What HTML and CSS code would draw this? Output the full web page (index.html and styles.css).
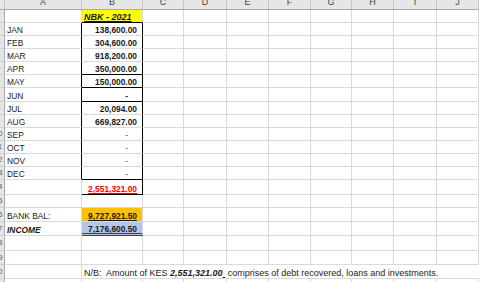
FILE: index.html
```html
<!DOCTYPE html>
<html>
<head>
<meta charset="utf-8">
<link rel="stylesheet" href="styles.css">
</head>
<body>
<div class="sheet">
  <div class="row hdr">
    <div class="ch"></div>
    <div class="ch"><span>A</span></div>
    <div class="ch"><span>B</span></div>
    <div class="ch"><span>C</span></div>
    <div class="ch"><span>D</span></div>
    <div class="ch"><span>E</span></div>
    <div class="ch"><span>F</span></div>
    <div class="ch"><span>G</span></div>
    <div class="ch"><span>H</span></div>
    <div class="ch"><span>I</span></div>
    <div class="ch"><span>J</span></div>
  </div>

  <div class="row h13">
    <div class="rh"><span>1</span></div>
    <div class="c"></div>
    <div class="c yel bb"><span class="nbk">NBK - 2021</span></div>
    <div class="c"></div><div class="c"></div><div class="c"></div><div class="c"></div><div class="c"></div><div class="c"></div><div class="c"></div><div class="c"></div>
  </div>

  <div class="row h13">
    <div class="rh"><span>2</span></div>
    <div class="c ar">JAN</div>
    <div class="c n br">138,600.00</div>
    <div class="c"></div><div class="c"></div><div class="c"></div><div class="c"></div><div class="c"></div><div class="c"></div><div class="c"></div><div class="c"></div>
  </div>

  <div class="row h13">
    <div class="rh"><span>3</span></div>
    <div class="c ar">FEB</div>
    <div class="c n br">304,600.00</div>
    <div class="c"></div><div class="c"></div><div class="c"></div><div class="c"></div><div class="c"></div><div class="c"></div><div class="c"></div><div class="c"></div>
  </div>

  <div class="row h13">
    <div class="rh"><span>4</span></div>
    <div class="c ar">MAR</div>
    <div class="c n br">918,200.00</div>
    <div class="c"></div><div class="c"></div><div class="c"></div><div class="c"></div><div class="c"></div><div class="c"></div><div class="c"></div><div class="c"></div>
  </div>

  <div class="row h13">
    <div class="rh"><span>5</span></div>
    <div class="c ar">APR</div>
    <div class="c n br bb">350,000.00</div>
    <div class="c"></div><div class="c"></div><div class="c"></div><div class="c"></div><div class="c"></div><div class="c"></div><div class="c"></div><div class="c"></div>
  </div>

  <div class="row h13">
    <div class="rh"><span>6</span></div>
    <div class="c ar">MAY</div>
    <div class="c n br bb">150,000.00</div>
    <div class="c"></div><div class="c"></div><div class="c"></div><div class="c"></div><div class="c"></div><div class="c"></div><div class="c"></div><div class="c"></div>
  </div>

  <div class="row h14">
    <div class="rh"><span>7</span></div>
    <div class="c ar">JUN</div>
    <div class="c n br bb"><span class="dash">-</span></div>
    <div class="c"></div><div class="c"></div><div class="c"></div><div class="c"></div><div class="c"></div><div class="c"></div><div class="c"></div><div class="c"></div>
  </div>

  <div class="row h13">
    <div class="rh"><span>8</span></div>
    <div class="c ar">JUL</div>
    <div class="c n br">20,094.00</div>
    <div class="c"></div><div class="c"></div><div class="c"></div><div class="c"></div><div class="c"></div><div class="c"></div><div class="c"></div><div class="c"></div>
  </div>

  <div class="row h13">
    <div class="rh"><span>9</span></div>
    <div class="c ar">AUG</div>
    <div class="c n br">669,827.00</div>
    <div class="c"></div><div class="c"></div><div class="c"></div><div class="c"></div><div class="c"></div><div class="c"></div><div class="c"></div><div class="c"></div>
  </div>

  <div class="row h13">
    <div class="rh"><span>10</span></div>
    <div class="c ar">SEP</div>
    <div class="c n br"><span class="dash light">-</span></div>
    <div class="c"></div><div class="c"></div><div class="c"></div><div class="c"></div><div class="c"></div><div class="c"></div><div class="c"></div><div class="c"></div>
  </div>

  <div class="row h13">
    <div class="rh"><span>11</span></div>
    <div class="c ar">OCT</div>
    <div class="c n br"><span class="dash light">-</span></div>
    <div class="c"></div><div class="c"></div><div class="c"></div><div class="c"></div><div class="c"></div><div class="c"></div><div class="c"></div><div class="c"></div>
  </div>

  <div class="row h13">
    <div class="rh"><span>12</span></div>
    <div class="c ar">NOV</div>
    <div class="c n br"><span class="dash light">-</span></div>
    <div class="c"></div><div class="c"></div><div class="c"></div><div class="c"></div><div class="c"></div><div class="c"></div><div class="c"></div><div class="c"></div>
  </div>

  <div class="row h13">
    <div class="rh"><span>13</span></div>
    <div class="c ar">DEC</div>
    <div class="c n br bb"><span class="dash light">-</span></div>
    <div class="c"></div><div class="c"></div><div class="c"></div><div class="c"></div><div class="c"></div><div class="c"></div><div class="c"></div><div class="c"></div>
  </div>

  <div class="row h15">
    <div class="rh"><span>14</span></div>
    <div class="c"></div>
    <div class="c n br bb"><span class="total">2,551,321.00</span></div>
    <div class="c"></div><div class="c"></div><div class="c"></div><div class="c"></div><div class="c"></div><div class="c"></div><div class="c"></div><div class="c"></div>
  </div>

  <div class="row h13">
    <div class="rh"><span>15</span></div>
    <div class="c"></div>
    <div class="c"></div>
    <div class="c"></div><div class="c"></div><div class="c"></div><div class="c"></div><div class="c"></div><div class="c"></div><div class="c"></div><div class="c"></div>
  </div>

  <div class="row h14">
    <div class="rh"><span>16</span></div>
    <div class="c">BANK BAL:</div>
    <div class="c n org"><span class="ul">9,727,921.50</span></div>
    <div class="c"></div><div class="c"></div><div class="c"></div><div class="c"></div><div class="c"></div><div class="c"></div><div class="c"></div><div class="c"></div>
  </div>

  <div class="row h14">
    <div class="rh"><span>17</span></div>
    <div class="c bi">INCOME</div>
    <div class="c n blu">7,176,600.50</div>
    <div class="c"></div><div class="c"></div><div class="c"></div><div class="c"></div><div class="c"></div><div class="c"></div><div class="c"></div><div class="c"></div>
  </div>

  <div class="row h15">
    <div class="rh"><span>18</span></div>
    <div class="c"></div>
    <div class="c"></div>
    <div class="c"></div><div class="c"></div><div class="c"></div><div class="c"></div><div class="c"></div><div class="c"></div><div class="c"></div><div class="c"></div>
  </div>

  <div class="row h14">
    <div class="rh"><span>19</span></div>
    <div class="c"></div>
    <div class="c"></div>
    <div class="c"></div><div class="c"></div><div class="c"></div><div class="c"></div><div class="c"></div><div class="c"></div><div class="c"></div><div class="c"></div>
  </div>

  <div class="row h14">
    <div class="rh"><span>20</span></div>
    <div class="c"></div>
    <div class="c note"><span>N/B:&nbsp; Amount of KES <b><i>2,551,321.00</i></b><span class="ul">&nbsp;</span> comprises of debt recovered, loans and investments.</span></div>
  </div>

  <div class="row h13">
    <div class="rh"><span>21</span></div>
    <div class="c"></div>
    <div class="c"></div>
    <div class="c"></div><div class="c"></div><div class="c"></div><div class="c"></div><div class="c"></div><div class="c"></div><div class="c"></div><div class="c"></div>
  </div>
</div>
</body>
</html>
```
FILE: styles.css
```css
* {
  box-sizing: border-box;
  margin: 0;
  padding: 0;
}

html, body {
  width: 479px;
  height: 282px;
  overflow: hidden;
  background: #ffffff;
}

body {
  font-family: "Liberation Sans", Arial, sans-serif;
  font-size: 8.4px;
  color: #1a1a1a;
}

.sheet {
  width: 479px;
}

.row {
  display: grid;
  grid-template-columns: 5px 77px 61px 41px 43px 42px 42px 41px 42px 43px 42px;
}

.h13 { height: 13px; }
.h14 { height: 14px; }
.h15 { height: 15px; }

.hdr {
  height: 10px;
  background: #e6e6e6;
  border-bottom: 1px solid #ababab;
}

.ch {
  border-right: 1px solid #c6c6c6;
  overflow: hidden;
  text-align: center;
  color: #444444;
  font-size: 9px;
  line-height: 9px;
}

.ch span {
  display: block;
  margin-top: -2px;
}

.rh {
  background: #e6e6e6;
  border-right: 1px solid #ababab;
  border-bottom: 1px solid #d0d0d0;
  overflow: hidden;
  display: flex;
  align-items: center;
}

.rh span {
  display: block;
  flex: none;
  width: 14px;
  margin-left: -9px;
  text-align: center;
  color: #5a5a5a;
  font-size: 8px;
  line-height: 8px;
}

.c {
  border-right: 1px solid #dadada;
  border-bottom: 1px solid #dadada;
  display: flex;
  align-items: flex-end;
  line-height: 8px;
  padding: 0 2px 1px 2px;
  white-space: nowrap;
  overflow: hidden;
}

.n {
  justify-content: flex-end;
  padding-right: 5px;
  font-weight: bold;
}

.ar { border-right-color: #000000; }
.br { border-right-color: #000000; }
.bb { border-bottom-color: #000000; }

.yel {
  background: #ffff00;
  justify-content: flex-start;
  padding-left: 2px;
}

.nbk {
  font-size: 9px;
  font-weight: bold;
  font-style: italic;
  text-decoration: underline;
}

.dash {
  margin-right: 9px;
}

.dash.light {
  font-weight: normal;
  color: #555555;
}

.total {
  color: #ff0000;
  text-decoration: underline double #ff0000;
}

.org {
  background: #ffc000;
}

.ul {
  text-decoration: underline;
}

.blu {
  background: #b4c6e7;
  border-bottom: 3px double #3a3f4a;
  padding-bottom: 0;
}

.bi {
  font-weight: bold;
  font-style: italic;
}

.note {
  grid-column: 3 / -1;
  overflow: visible;
  padding-left: 2px;
  border-right: none;
  font-size: 9px;
}
```
